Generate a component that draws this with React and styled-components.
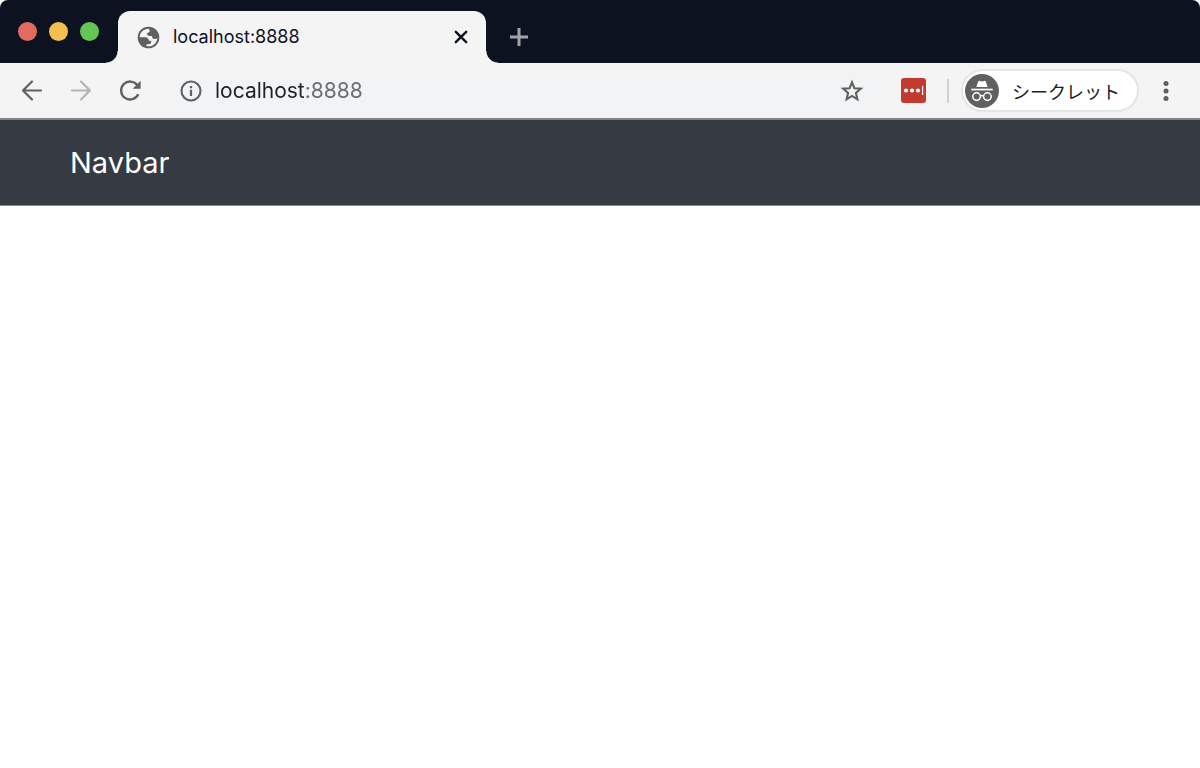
import React, { useState } from 'react';
import styled, { createGlobalStyle } from 'styled-components';

const GlobalStyle = createGlobalStyle`
*{
box-sizing:border-box;
}
body{
margin:0;
background-color:#FFFFFF;
font-family:Inter, "Noto Sans CJK JP", sans-serif;
}
`;

const Browser = styled.div`
display:flex;
flex-direction:column;
min-height:100vh;
border-radius:8px;
overflow:hidden;
`;

const TabStrip = styled.div`
display:flex;
align-items:flex-end;
height:63px;
background-color:#0C121F;
`;

const WindowControls = styled.div`
display:flex;
align-items:center;
align-self:stretch;
gap:12px;
width:118px;
padding-left:18px;
`;

const ControlDot = styled.button`
width:19px;
height:19px;
padding:0;
border:none;
border-radius:50%;
background-color:${props=>props.$color};
`;

const Tab = styled.div`
position:relative;
display:flex;
align-items:center;
width:368px;
height:52px;
padding:0 14px 0 19px;
border-radius:12px 12px 0 0;
background-color:#F4F4F4;

&::before, &::after{
content:"";
position:absolute;
bottom:0;
width:12px;
height:12px;
}
&::before{
left:-12px;
background:radial-gradient(circle at 0 0, transparent 11px, #F4F4F4 12px);
}
&::after{
right:-12px;
background:radial-gradient(circle at 100% 0, transparent 11px, #F4F4F4 12px);
}
`;

const TabTitle = styled.span`
flex:1;
margin-left:13px;
font-size:18px;
line-height:24px;
color:#0C121F;
`;

const IconButton = styled.button`
display:flex;
align-items:center;
justify-content:center;
width:${props=>props.$size ? props.$size : '24px'};
height:24px;
padding:0;
border:none;
background:none;
color:${props=>props.$color ? props.$color : '#5F6060'};
`;

const NewTab = styled.div`
display:flex;
align-items:center;
height:52px;
margin-left:21px;
`;

const Toolbar = styled.div`
display:flex;
align-items:center;
height:57px;
padding:0 22px 0 20px;
background-color:#F4F4F4;
border-bottom:2px solid #808284;
`;

const NavButtons = styled.div`
display:flex;
gap:25px;
`;

const AddressBar = styled.label`
display:flex;
align-items:center;
flex:1;
height:42px;
margin-left:22px;
padding:0 16px;
border-radius:21px;
background-color:#F1F3F4;
`;

const Address = styled.input`
flex:1;
min-width:0;
margin-left:13px;
padding:0;
border:none;
outline:none;
font-family:inherit;
font-size:21px;
line-height:28px;
color:transparent;
caret-color:#202124;
background:linear-gradient(to right, #202124 90px, #6B6E71 90px);
background-clip:text;
`;

const Actions = styled.div`
display:flex;
align-items:center;
`;

const Extension = styled.button`
display:flex;
width:25px;
height:25px;
margin-left:21px;
padding:0;
border:none;
border-radius:3px;
background-color:#C23B30;
`;

const Divider = styled.div`
width:2px;
height:24px;
margin:0 12px 0 21px;
background-color:#D0D1D2;
`;

const Incognito = styled.div`
display:flex;
align-items:center;
width:178px;
height:43px;
padding-left:2px;
border:2px solid #E4E5E6;
border-radius:22px;
background-color:#FFFFFF;
`;

const IncognitoLabel = styled.span`
margin-left:13px;
font-family:"Noto Sans CJK JP", sans-serif;
font-size:18px;
line-height:28px;
color:#202124;
`;

const Menu = styled.div`
margin-left:15px;
`;

const Navbar = styled.nav`
display:flex;
align-items:center;
height:86px;
padding:0 70px;
background-color:#363A42;
border-bottom:1px solid #85888D;
`;

const Brand = styled.a`
font-size:29px;
line-height:44px;
color:#FFFFFF;
text-decoration:none;
`;

const Page = styled.main`
flex:1;
background-color:#FFFFFF;
`;

const GlobeIcon = () => (
    <svg width="23" height="23" viewBox="0 0 23 23" aria-hidden="true">
        <circle cx="11.5" cy="11.5" r="10.8" fill="#5F6060"/>
        <path d="M11.800 2.700C6.500 2.700 2.700 6.700 2.700 11.300H8.200C10.500 11.300 11.800 12.700 11.800 14.800H13.600Q14.300 14.800 14.300 15.600Q14.300 18.300 11.600 18.300H9.500V20.100C15.500 21.400 20.300 16.900 20.300 11.700C19.500 12.700 18.600 13 17.600 13C15.800 13 15.300 12 15.200 10.700Q15.100 9.900 14.300 9.900H12.200Q10 9.900 10 8.100Q10 6.700 11.600 6.500Q12.600 6.300 12.600 5.200Q12.700 3.500 11.800 2.700Z" fill="#F4F4F4"/>
    </svg>
);

const ArrowIcon = ({forward}) => (
    <svg width="24" height="24" viewBox="0 0 24 24" fill="none" stroke="currentColor" strokeWidth="2.200" strokeLinecap="round" strokeLinejoin="round" aria-hidden="true">
        <path d={forward ? "M3 11.500H21M12 2.500L21 11.500L12 20.500" : "M21 11.500H3M12 2.500L3 11.500L12 20.500"}/>
    </svg>
);

const ReloadIcon = () => (
    <svg width="24" height="24" viewBox="0 0 24 24" aria-hidden="true">
        <path d="M19.500 6.300A9 9 0 1 0 20.300 15.300" fill="none" stroke="currentColor" strokeWidth="2.300"/>
        <path d="M22.600 1.800V9.800H14.600Z" fill="currentColor"/>
    </svg>
);

const InfoIcon = () => (
    <svg width="22" height="22" viewBox="0 0 22 22" aria-hidden="true">
        <circle cx="11" cy="11" r="9.500" fill="none" stroke="#5F6060" strokeWidth="2.100"/>
        <path d="M9.900 6H12.100V8.200H9.900ZM9.900 9.800H12.100V16H9.900Z" fill="#5F6060"/>
    </svg>
);

const StarIcon = () => (
    <svg width="24" height="24" viewBox="0 0 24 24" fill="none" stroke="currentColor" strokeWidth="2.100" aria-hidden="true">
        <path d="M12 3.300L14.400 9.200L20.800 9.700L15.900 13.900L17.400 20.300L12 16.900L6.600 20.300L8.100 13.900L3.200 9.700L9.600 9.200Z"/>
    </svg>
);

const PasswordIcon = () => (
    <svg width="25" height="25" viewBox="0 0 25 25" fill="#FFFFFF" aria-hidden="true">
        <circle cx="5" cy="12.500" r="2.100"/>
        <circle cx="11" cy="12.500" r="2.100"/>
        <circle cx="17" cy="12.500" r="2.100"/>
        <rect x="21" y="8" width="1.200" height="9"/>
    </svg>
);

const IncognitoIcon = () => (
    <svg width="34" height="34" viewBox="0 0 34 34" aria-hidden="true">
        <circle cx="17" cy="17" r="17" fill="#5F6060"/>
        <path d="M11.300 13L13.200 7.600Q13.600 6.500 14.800 6.900L17 7.500L19.200 6.900Q20.400 6.500 20.800 7.600L22.700 13Z" fill="#FFFFFF"/>
        <rect x="6.300" y="14.700" width="21.400" height="1.700" fill="#FFFFFF"/>
        <g fill="none" stroke="#FFFFFF" strokeWidth="1.500">
            <circle cx="11.600" cy="22.600" r="3.800"/>
            <circle cx="22.400" cy="22.600" r="3.800"/>
            <path d="M15.300 22Q17 21 18.700 22"/>
        </g>
    </svg>
);

const windowDots = [
    {
        id:1,
        label:"Close window",
        color:"#E26A5F"
    },
    {
        id:2,
        label:"Minimize window",
        color:"#F3C04F"
    },
    {
        id:3,
        label:"Zoom window",
        color:"#66C655"
    }
]

const App = () => {
    const [url, setUrl] = useState("localhost:8888");

    return(
        <>
        <GlobalStyle/>
        <Browser>
            <TabStrip>
                <WindowControls>
                    {windowDots.map(o=><ControlDot key={o.id} $color={o.color} aria-label={o.label}/>)}
                </WindowControls>
                <Tab>
                    <GlobeIcon/>
                    <TabTitle>localhost:8888</TabTitle>
                    <IconButton $size="22px" $color="#0C121F" aria-label="Close tab">
                        <svg width="22" height="22" viewBox="0 0 22 22" stroke="currentColor" strokeWidth="2.400" strokeLinecap="round">
                            <path d="M5.800 5.800L16.200 16.200M16.200 5.800L5.800 16.200"/>
                        </svg>
                    </IconButton>
                </Tab>
                <NewTab>
                    <IconButton $color="#A2A5A8" aria-label="New tab">
                        <svg width="24" height="24" viewBox="0 0 24 24" stroke="currentColor" strokeWidth="3">
                            <path d="M3 12H21M12 3V21"/>
                        </svg>
                    </IconButton>
                </NewTab>
            </TabStrip>

            <Toolbar>
                <NavButtons>
                    <IconButton aria-label="Back"><ArrowIcon/></IconButton>
                    <IconButton $color="#B4B5B5" aria-label="Forward"><ArrowIcon forward/></IconButton>
                    <IconButton aria-label="Reload"><ReloadIcon/></IconButton>
                </NavButtons>
                <AddressBar>
                    <InfoIcon/>
                    <Address type="text" aria-label="Address" value={url} onChange={e=>setUrl(e.target.value)}/>
                    <IconButton aria-label="Bookmark"><StarIcon/></IconButton>
                </AddressBar>
                <Actions>
                    <Extension aria-label="Passwords"><PasswordIcon/></Extension>
                    <Divider/>
                    <Incognito>
                        <IncognitoIcon/>
                        <IncognitoLabel>シークレット</IncognitoLabel>
                    </Incognito>
                    <Menu>
                        <IconButton aria-label="Menu">
                            <svg width="24" height="24" viewBox="0 0 24 24" fill="currentColor">
                                <circle cx="12" cy="4.500" r="2.500"/>
                                <circle cx="12" cy="12" r="2.500"/>
                                <circle cx="12" cy="19.500" r="2.500"/>
                            </svg>
                        </IconButton>
                    </Menu>
                </Actions>
            </Toolbar>

            <Navbar>
                <Brand href="#">Navbar</Brand>
            </Navbar>
            <Page/>
        </Browser>
        </>
    );
}

export default App;
